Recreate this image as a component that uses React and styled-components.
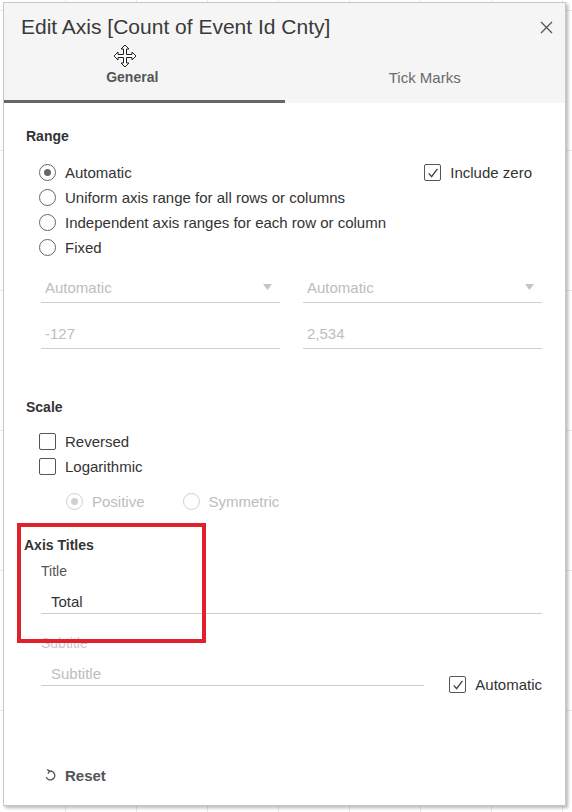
import React from "react";
import styled, { createGlobalStyle } from "styled-components";

const GlobalStyle = createGlobalStyle`
  html, body {
    margin: 0;
    padding: 0;
  }
  body {
    width: 572px;
    height: 812px;
    overflow: hidden;
    font-family: "Liberation Sans", Arial, sans-serif;
    background-color: #fff;
    background-image:
      linear-gradient(#e8e8e8 1px, transparent 1px),
      linear-gradient(90deg, #e8e8e8 1px, transparent 1px);
    background-size: 71px 140px;
    background-position: -6px 10px;
  }
`;

function Radio({ checked, disabled, children }) {
    return (
        <Option $disabled={disabled}>
            <RadioMark $checked={checked} $disabled={disabled} />
            {children}
        </Option>
    );
}

function Check({ checked, children, className }) {
    return (
        <Option className={className}>
            <CheckMark>
                {checked && (
                    <svg width="12" height="12" viewBox="0 0 12 12">
                        <path d="M1.8 6.4 L4.6 9.6 L10.4 1.8" fill="none" stroke="#444" strokeWidth="1.4" />
                    </svg>
                )}
            </CheckMark>
            {children}
        </Option>
    );
}

function Select({ value }) {
    return (
        <Field>
            <span>{value}</span>
            <svg width="9" height="6" viewBox="0 0 9 6">
                <path d="M0 0 H9 L4.5 6 Z" fill="#c4c4c4" />
            </svg>
        </Field>
    );
}

function App() {
    return (
        <>
            <GlobalStyle />
            <Dialog>
                <Header>
                    <TitleRow>
                        <Title>Edit Axis [Count of Event Id Cnty]</Title>
                        <Close aria-label="Close">
                            <svg width="13" height="13" viewBox="0 0 13 13">
                                <path d="M1 1 L12 12 M12 1 L1 12" stroke="#555" strokeWidth="1.3" />
                            </svg>
                        </Close>
                    </TitleRow>
                    <Tabs>
                        <Tab $active>General</Tab>
                        <Tab>Tick Marks</Tab>
                    </Tabs>
                    <MoveCursor width="24" height="24" viewBox="0 0 24 24">
                        <path
                            d="M12 1 L16 5 H13.5 V10.5 H19 V8 L23 12 L19 16 V13.5 H13.5 V19 H16 L12 23 L8 19 H10.5 V13.5 H5 V16 L1 12 L5 8 V10.5 H10.5 V5 H8 Z"
                            fill="#fff"
                            stroke="#222"
                            strokeWidth="1"
                            strokeLinejoin="round"
                        />
                    </MoveCursor>
                </Header>

                <Body>
                    <SectionTitle $top={23}>Range</SectionTitle>
                    <RangeGrid>
                        <OptionList>
                            <Radio checked>Automatic</Radio>
                            <Radio>Uniform axis range for all rows or columns</Radio>
                            <Radio>Independent axis ranges for each row or column</Radio>
                            <Radio>Fixed</Radio>
                        </OptionList>
                        <div>
                            <Check checked>Include zero</Check>
                        </div>
                    </RangeGrid>

                    <FieldRow $top={12}>
                        <Select value="Automatic" />
                        <Select value="Automatic" />
                    </FieldRow>
                    <FieldRow $top={15}>
                        <Field>-127</Field>
                        <Field>2,534</Field>
                    </FieldRow>

                    <SectionTitle $top={48}>Scale</SectionTitle>
                    <CheckList>
                        <Check>Reversed</Check>
                        <Check>Logarithmic</Check>
                    </CheckList>
                    <SubOptions>
                        <Radio checked disabled>Positive</Radio>
                        <Radio disabled>Symmetric</Radio>
                    </SubOptions>

                    <AxisTitles>
                        <SectionTitle $top={0} $shift={-2}>Axis Titles</SectionTitle>
                        <FieldLabel $top={7}>Title</FieldLabel>
                        <TextField>Total</TextField>
                        <FieldLabel $top={20} $muted>Subtitle</FieldLabel>
                        <SubtitleRow>
                            <TextField $placeholder>Subtitle</TextField>
                            <AutoCheck checked>Automatic</AutoCheck>
                        </SubtitleRow>
                        <Highlight />
                    </AxisTitles>
                </Body>

                <Footer>
                    <svg width="11" height="12" viewBox="0 0 11 12">
                        <path d="M4.2 2.2 A4.4 4.4 0 1 1 1.3 8.2" fill="none" stroke="#555" strokeWidth="1.4" />
                        <path d="M2.2 0.4 L4.6 2.2 L2.9 4.6" fill="none" stroke="#555" strokeWidth="1.4" />
                    </svg>
                    Reset
                </Footer>
            </Dialog>
        </>
    );
}

const Dialog = styled.div`
    position: relative;
    box-sizing: border-box;
    width: 563px;
    height: 804px;
    margin: 2px 0 0 3px;
    display: flex;
    flex-direction: column;
    background-color: #fff;
    border: 1px solid #c8c8c8;
    box-shadow: 2px 2px 3px rgba(0, 0, 0, 0.28);
`

const Header = styled.header`
    position: relative;
    background-color: #f5f5f5;
`

const TitleRow = styled.div`
    height: 51px;
    display: flex;
    align-items: center;
    justify-content: space-between;
    padding: 0 12px 3px 17px;
    box-sizing: border-box;
`

const Title = styled.h1`
    margin: 0;
    font-size: 21px;
    font-weight: normal;
    color: #3a3a3a;
`

const Close = styled.button`
    display: flex;
    padding: 0;
    border: none;
    background: none;
`

const Tabs = styled.div`
    display: flex;
    height: 49px;
`

const Tab = styled.div`
    flex: 0 0 50%;
    display: flex;
    align-items: center;
    justify-content: center;
    box-sizing: border-box;
    padding-right: ${p => (p.$active ? "24px" : "0")};
    font-size: ${p => (p.$active ? "14px" : "15px")};
    font-weight: ${p => (p.$active ? "bold" : "normal")};
    color: ${p => (p.$active ? "#555" : "#6a6a6a")};
    border-bottom: 3px solid ${p => (p.$active ? "#666" : "transparent")};
`

const MoveCursor = styled.svg`
    position: absolute;
    left: 109px;
    top: 41px;
`

const Body = styled.div`
    padding: 0 23px 0 22px;
`

const SectionTitle = styled.h2`
    margin: ${p => p.$top}px 0 0 ${p => p.$shift || 0}px;
    font-size: 14px;
    line-height: 20px;
    font-weight: bold;
    color: #333;
`

const RangeGrid = styled.div`
    display: flex;
    justify-content: space-between;
    margin-top: 14px;
    padding: 0 10px 0 13px;
`

const OptionList = styled.div`
    display: flex;
    flex-direction: column;
`

const Option = styled.label`
    display: flex;
    align-items: center;
    gap: 9px;
    height: 25px;
    font-size: 15px;
    color: ${p => (p.$disabled ? "#bdbdbd" : "#333")};
    white-space: nowrap;
`

const RadioMark = styled.span`
    box-sizing: border-box;
    width: 17px;
    height: 17px;
    border-radius: 50%;
    border: 1px solid ${p => (p.$disabled ? "#cfcfcf" : "#666")};
    display: flex;
    align-items: center;
    justify-content: center;
    &::after {
        content: "";
        display: ${p => (p.$checked ? "block" : "none")};
        width: 7px;
        height: 7px;
        border-radius: 50%;
        background-color: ${p => (p.$disabled ? "#cfcfcf" : "#666")};
    }
`

const CheckMark = styled.span`
    box-sizing: border-box;
    width: 17px;
    height: 17px;
    border: 1px solid #555;
    border-radius: 2px;
    display: flex;
    align-items: center;
    justify-content: center;
`

const FieldRow = styled.div`
    display: grid;
    grid-template-columns: 1fr 1fr;
    gap: 23px;
    margin: ${p => p.$top}px 0 0 15px;
`

const Field = styled.div`
    height: 30px;
    display: flex;
    align-items: center;
    justify-content: space-between;
    padding: 0 8px 0 4px;
    border-bottom: 1px solid #cfcfcf;
    font-size: 15px;
    color: #bdbdbd;
`

const CheckList = styled.div`
    display: flex;
    flex-direction: column;
    margin-top: 12px;
    padding-left: 13px;
`

const SubOptions = styled.div`
    display: flex;
    gap: 38px;
    margin-top: 10px;
    padding-left: 40px;
`

const AxisTitles = styled.section`
    position: relative;
    margin-top: 21px;
`

const FieldLabel = styled.div`
    margin: ${p => p.$top}px 0 0 15px;
    font-size: 14px;
    line-height: 18px;
    color: ${p => (p.$muted ? "#c8c8c8" : "#555")};
`

const TextField = styled.div`
    flex: 1;
    height: 24px;
    display: flex;
    align-items: center;
    margin: 9px 0 0 15px;
    padding-left: 10px;
    border-bottom: 1px solid #cfcfcf;
    font-size: 15px;
    color: ${p => (p.$placeholder ? "#bdbdbd" : "#333")};
`

const SubtitleRow = styled.div`
    display: flex;
    align-items: flex-start;
    gap: 25px;
`

const AutoCheck = styled(Check)`
    margin-top: 20px;
`

const Highlight = styled.div`
    position: absolute;
    left: -9px;
    top: -12px;
    width: 189px;
    height: 120px;
    box-sizing: border-box;
    border: 4px solid #e0202b;
    pointer-events: none;
`

const Footer = styled.div`
    margin-top: auto;
    height: 60px;
    display: flex;
    align-items: center;
    gap: 9px;
    padding-left: 41px;
    font-size: 15px;
    font-weight: bold;
    color: #555;
`

export default App
